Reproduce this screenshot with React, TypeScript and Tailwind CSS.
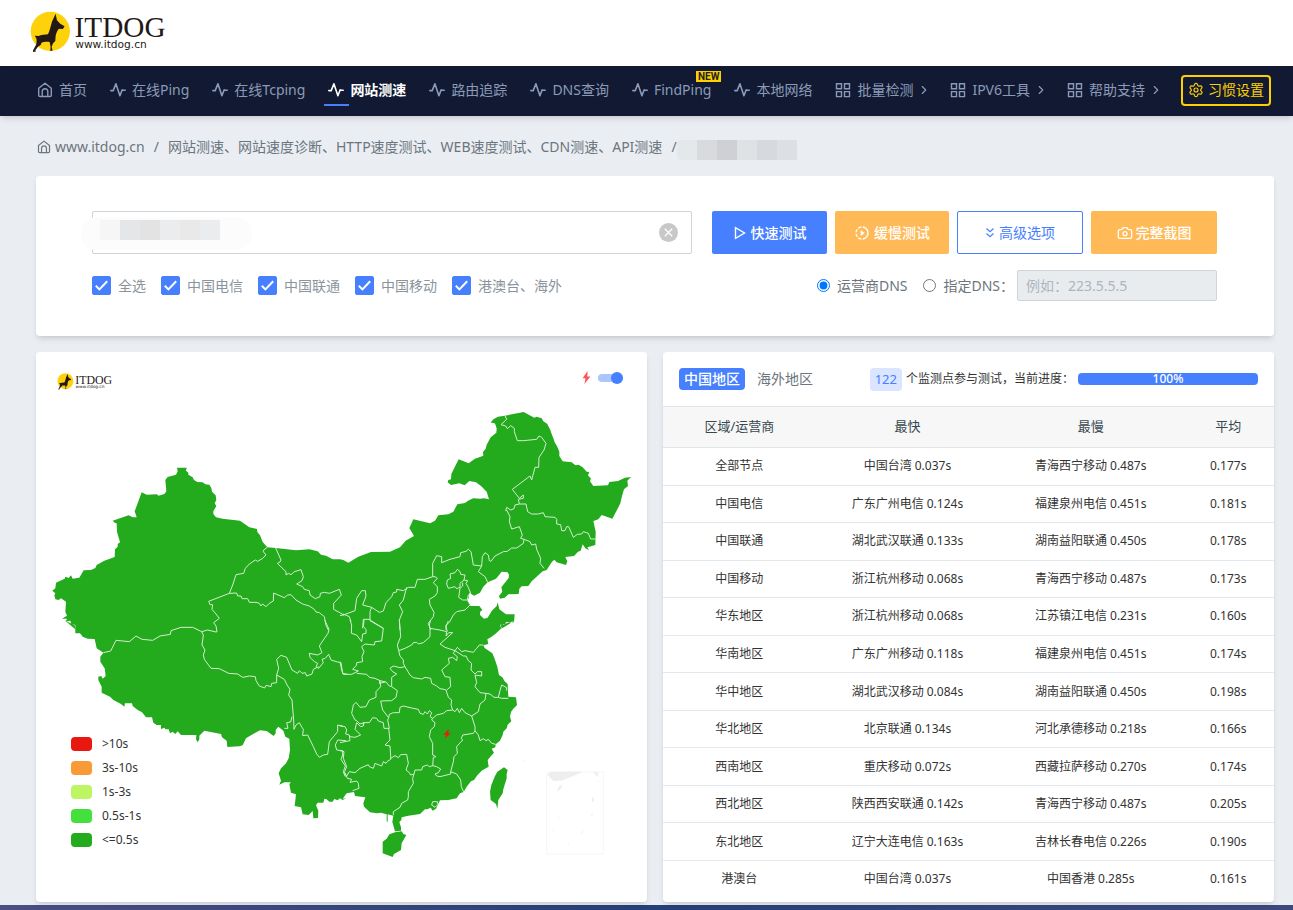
// src/App.tsx
import React, { useState } from 'react';
import { MdOutlineSlowMotionVideo } from 'react-icons/md';
import { Camera, ChevronRight, ChevronsDown, Settings } from 'lucide-react';

type IconName = 'home' | 'pulse' | 'grid';

const navItems: { label: string; icon: IconName; active?: boolean; isNew?: boolean; more?: boolean }[] = [
  { label: '首页', icon: 'home' },
  { label: '在线Ping', icon: 'pulse' },
  { label: '在线Tcping', icon: 'pulse' },
  { label: '网站测速', icon: 'pulse', active: true },
  { label: '路由追踪', icon: 'pulse' },
  { label: 'DNS查询', icon: 'pulse' },
  { label: 'FindPing', icon: 'pulse', isNew: true },
  { label: '本地网络', icon: 'pulse' },
  { label: '批量检测', icon: 'grid', more: true },
  { label: 'IPV6工具', icon: 'grid', more: true },
  { label: '帮助支持', icon: 'grid', more: true },
];

const lines = ['全选', '中国电信', '中国联通', '中国移动', '港澳台、海外'];

const rows = [
  ['全部节点', '中国台湾 0.037s', '青海西宁移动 0.487s', '0.177s'],
  ['中国电信', '广东广州电信 0.124s', '福建泉州电信 0.451s', '0.181s'],
  ['中国联通', '湖北武汉联通 0.133s', '湖南益阳联通 0.450s', '0.178s'],
  ['中国移动', '浙江杭州移动 0.068s', '青海西宁移动 0.487s', '0.173s'],
  ['华东地区', '浙江杭州移动 0.068s', '江苏镇江电信 0.231s', '0.160s'],
  ['华南地区', '广东广州移动 0.118s', '福建泉州电信 0.451s', '0.174s'],
  ['华中地区', '湖北武汉移动 0.084s', '湖南益阳联通 0.450s', '0.198s'],
  ['华北地区', '北京联通 0.134s', '河北承德移动 0.218s', '0.166s'],
  ['西南地区', '重庆移动 0.072s', '西藏拉萨移动 0.270s', '0.174s'],
  ['西北地区', '陕西西安联通 0.142s', '青海西宁移动 0.487s', '0.205s'],
  ['东北地区', '辽宁大连电信 0.163s', '吉林长春电信 0.226s', '0.190s'],
  ['港澳台', '中国台湾 0.037s', '中国香港 0.285s', '0.161s'],
];

const legend = [
  { label: '>10s', color: 'bg-[#e81710]' },
  { label: '3s-10s', color: 'bg-[#f89a35]' },
  { label: '1s-3s', color: 'bg-[#bef663]' },
  { label: '0.5s-1s', color: 'bg-[#44e03e]' },
  { label: '<=0.5s', color: 'bg-[#24aa1d]' },
];

// The map is drawn in four quarters: [dx, dy] is where each quarter starts.
const NW = [0, 0];
const NE = [912, 0];
const SW = [0, 810];
const SE = [912, 810];

const outline: { at: number[]; pts: string }[] = [
  {
    at: NW,
    pts: '420,374 425,364 423,353 452,353 450,362 457,368 457,374 470,382 474,390 484,396 500,397 508,403 520,404 526,414 528,425 539,436 541,450 536,460 541,468 532,484 532,492 540,502 560,506 612,512 640,532 663,537 664,546 672,556 680,576 694,592 719,594 780,601 820,598 845,604 855,614 870,617 890,628',
  },
  {
    at: NE,
    pts: '0,628 10,630 25,638 55,620 93,606 150,605 180,592 197,572 222,558 208,534 220,508 270,520 285,512 295,496 325,493 340,485 352,463 375,459 384,452 400,445 420,446 432,445 447,448 440,425 424,409 408,397 388,393 374,406 358,400 333,405 323,397 325,390 333,388 334,372 356,328 386,340 405,326 430,317 429,306 437,296 440,284 452,262 469,248 470,236 467,225 463,219 452,218 460,208 474,200 495,197 551,186 583,203 590,200 605,205 610,214 622,222 631,240 635,252 640,265 644,277 652,290 658,305 658,318 668,334 695,337 706,346 716,344 728,352 740,365 748,366 744,376 753,386 750,394 760,408 804,406 808,396 834,393 855,383 873,381 862,392 864,408 852,418 846,438 841,460 834,474 817,506 785,495 775,508 760,513 767,545 766,585 748,590 742,592 747,601 736,595 728,583 722,602 714,605 702,618 676,621 682,634 678,645 650,637 643,629 636,635 620,660 608,664 575,694 565,708 545,709 538,716 536,732 505,733 494,743 480,746 477,738 487,725 484,712 506,684 507,674 503,667 485,665 468,686 443,697 430,710 420,728 402,737 388,728 386,745 382,752 392,768 418,768 427,780 420,786 420,795 432,806 443,803 455,783 470,768 473,757 478,778 498,793 524,793 522,817 510,818 500,815 492,824 480,824 484,836',
  },
  {
    at: SE,
    pts: '522,3 500,10 482,16 485,24 470,38 455,50 442,58 445,72 430,76 434,84 457,100 463,114 472,140 477,165 487,172 494,184 503,192 505,230 528,232 531,255 520,266 513,276 510,290 514,304 503,314 500,325 490,335 488,345 480,362 467,373 466,382 455,386 462,398 453,408 443,420 446,440 435,446 425,452 412,466 402,480 393,484 380,500 371,516 360,520 350,535 325,540 300,541 288,566 278,572 272,563 262,568 255,568 240,582 205,587 185,592 184,600 178,606 183,622 183,632 165,634 157,606 160,587 143,583 143,606 140,604 140,583 122,578 112,580 90,577 72,560 70,550 76,532 45,528 42,516 20,520 8,536',
  },
  {
    at: SW,
    pts: '930,535 920,540 912,535 905,541 895,537 890,545 880,545 872,538 865,536 862,548 845,548 840,556 847,572 846,594 832,595 830,573 818,585 800,583 795,562 776,558 780,523 765,518 760,492 765,487 745,487 730,494 735,482 728,460 735,445 750,430 758,415 762,390 760,356 748,350 742,332 727,320 719,330 719,340 713,348 692,333 672,331 650,343 630,355 620,376 610,379 574,381 572,362 558,352 555,342 505,332 490,347 490,358 485,367 480,358 481,345 435,345 425,334 418,342 410,335 402,340 398,328 388,328 386,323 375,327 375,315 362,315 352,308 348,292 330,292 318,277 305,270 290,258 288,250 267,250 265,260 255,252 232,240 222,230 197,218 197,200 187,180 187,170 196,168 200,176 209,168 206,145 193,125 193,110 202,98 182,85 176,57 155,56 140,50 132,40 118,40 118,15 100,8 85,0',
  },
  {
    at: NW,
    pts: '118,838 116,825 105,820 103,812 90,814 93,806 78,806 93,797 88,786 90,755 75,745 68,750 58,748 55,735 58,730 49,722 58,715 60,698 86,686 88,680 98,684 105,676 110,686 130,683 143,661 165,660 178,654 182,645 205,632 236,621 237,598 245,590 245,582 252,577 243,545 242,520 236,518 230,512 278,496 290,502 302,502 296,484 317,427 332,434 362,433 368,437 385,432 391,424 388,390 395,381',
  },
];

const outlinePoints = outline
  .flatMap(({ at, pts }) => pts.split(' ').map((p) => p.split(',').map(Number)).map(([x, y]) => `${x + at[0]},${y + at[1]}`))
  .join(' ');

const borders: { at: number[]; paths: string[] }[] = [
  {
    at: NW,
    paths: [
      '694,592 683,600 682,605 690,615 680,625 665,634 658,630 640,642 628,655 623,670 600,674 590,705 580,730 518,754 522,764 530,764 528,778 540,792 550,805 533,818 540,828 543,845 540,846 515,840 497,845 470,832 435,832 405,842 403,853 372,858 350,871 318,868 300,858 280,875 240,871 224,903 202,908',
      '719,594 735,630 732,636 724,640 750,665 750,675 757,670 765,674 775,665 795,659 802,680 798,692 782,702 800,710 805,718 820,722 822,735 838,746 852,740 853,730 865,727 880,730 910,718 916,735 893,760 893,778 915,790 925,797',
      '580,730 602,729 605,738 615,738 618,746 635,746 640,757 660,757 670,760 675,768 680,762 690,770 700,760 712,753 713,729 745,743 755,735 765,734 780,750 800,762 820,768 835,778 840,786 850,788 865,800 870,826 877,840',
    ],
  },
  {
    at: SW,
    paths: [
      '866,0 879,28 876,40 862,60 850,78 858,98 845,105 820,100 822,112 835,125 845,130 840,140 848,145 862,128 858,118 868,115 878,103 885,120 905,126 915,128 920,160 935,163',
      '848,140 832,148 828,162 812,168 808,158 798,160 790,152 785,160 768,150 752,112 735,106 722,118 728,145 722,165 722,188 707,190 705,200 690,196 686,204 670,198 660,182 658,170 640,168 620,172 605,162 578,160 550,146 525,145 505,118 502,105 507,90 498,75 502,45 497,35',
      '722,165 745,178 753,195 762,208 758,225 768,240 773,300 774,328',
      '768,290 764,306 752,308 756,325 745,325',
      '774,328 780,315 790,308 798,322 802,328 800,347 815,345 832,380 842,402 850,412 862,405 875,403 880,365 905,335 905,315 920,318',
      '930,362 905,360 898,375 902,390 920,392 920,405 915,418 928,438 922,455 928,470',
    ],
  },
  {
    at: SE,
    paths: [
      '0,318 15,320 20,330 17,342 28,345 30,362 0,368',
      '30,350 45,352 62,345 45,328 50,308 62,320 70,318 72,308 60,312 50,302 45,300 35,280 40,255 48,247 60,262 78,260 88,240 108,232 108,215 122,200 120,182 138,186 148,198 155,200 172,212 168,232 155,242 122,243 128,270 146,293',
      '146,293 143,300 148,325 132,325 130,308 115,303 110,295 98,293 88,308 70,308 70,318',
      '146,325 150,360 135,375 150,378 152,410 152,418 142,424 138,430 130,425 125,438 105,430 100,445 88,440 85,434 60,445 45,458 28,455 20,468 12,460 20,440 10,415 12,395 0,392',
      '15,458 22,475 35,478 30,487 50,483 55,490 57,505 38,512',
      '152,415 165,407 175,413 182,404 200,403 205,430 198,450 208,458 212,465 222,462 225,450 245,450 248,440 262,435 268,440 278,437',
      '222,462 218,475 220,490 205,515 205,530 203,540 185,550 180,562 160,575 160,585',
      '278,437 280,412 288,410 278,405 278,370 268,350 272,330 283,320 285,308 275,300 278,295',
      '146,293 148,283 160,278 178,278 180,262 190,258 215,264 235,268 240,280 250,283 255,275 262,282 268,272 275,278 270,290 278,295 290,285 310,280 320,272 338,270 333,255 335,240 325,232 318,210',
      '195,140 210,165 220,173 245,177 255,172 272,175 275,190 290,198 300,206 312,208 318,210',
      '176,92 180,108 190,120 190,130 195,140 180,143 160,138 150,145 158,155 170,162 155,172 155,198',
      '178,0 182,50 172,75 176,92 195,85 215,75 220,68 230,67 235,72 250,68 270,50 270,25 268,15 272,0',
      '270,25 300,30 320,35 318,48 326,38 338,38 300,72 315,82 345,92',
      '325,3 318,20 322,35',
      '345,92 340,100 352,110 350,122 338,112 325,115 328,130 305,150 315,170 330,172 332,200 320,210',
      '345,92 352,82 365,95 375,92 390,95 400,97 410,85 418,75 430,75',
      '345,92 370,108 378,108 385,122 395,130 393,150 405,162 412,155 425,155 425,168 405,165 410,188 405,200 420,218 438,220 435,240 420,252 415,275 395,288 405,320 405,332',
      '338,270 345,275 352,265 358,278 365,265 375,278 395,288',
      '438,220 450,222 462,232 475,232 480,212 485,195 500,203 500,212',
      '475,232 485,235 505,235',
      '405,332 400,340 368,345 364,355 368,360 350,380 352,400 342,410 340,425 332,455',
      '405,332 415,345 420,362 430,356 438,362 445,358 455,370 467,373',
      '278,437 290,440 302,447 295,458 285,462 290,468 300,470 332,462 332,455 350,462 362,480 364,500 371,516',
      '275,555 278,545 292,545 294,553 285,562 275,555',
      '0,125 5,150 10,163 35,163 55,153 38,148 50,135 50,128 68,125 66,110 72,95 65,80 75,72 103,75 105,65 125,63 130,25 90,0',
      '50,160 80,163 88,172 105,175 120,182 118,190 135,186',
      '30,0 35,15 34,40 50,45 65,65 68,42 78,40 78,28 70,20 72,0',
    ],
  },
  {
    at: NE,
    paths: [
      '0,797 15,793 45,782 50,745 65,722 76,722 78,738 68,765 95,772 118,787 130,783 138,758 155,740 160,728 170,726 170,718 190,722 205,712 225,712 232,688 255,688 278,680 278,640 290,617 305,620 305,638 330,628 360,620 362,608 378,604 385,598 393,605 400,645 425,648 415,665 435,680 443,697',
      '200,712 190,750 178,765 188,785 178,810 180,840',
      '10,792 28,800 33,815',
      '95,772 90,785 90,812 130,835',
      '90,808 70,808 68,835',
      '425,648 427,620 435,608 445,615 448,632 453,634 465,618 490,605 502,604 515,594 530,594 550,580 552,568 570,575 575,585 587,582 590,598 602,625 600,640 612,655',
      '278,680 285,680 292,685 280,698 292,710 292,728 285,738 268,748 270,765 282,787 280,800 265,820 272,840',
      '318,840 318,825 328,817 340,795 350,785 375,780 390,765',
      '320,702 322,690 332,685 330,672 345,668 352,658 360,665 362,673 375,675 372,690 360,700 360,712 350,716 345,710 325,715 320,702',
      '372,690 383,692 378,700 385,712 392,730 385,735 382,750 368,750 356,742 360,715 368,708 368,698',
      '552,568 542,565 547,555 538,530 515,537 508,515 510,500 500,480 497,482 500,472 512,480 522,476 525,465 538,462',
      '495,197 500,208 483,224 497,228 502,236 512,227 523,235 523,245 532,272 550,272 590,268 597,258 605,262 618,280 612,300 597,322 596,352 585,352 575,390 570,378 517,418 538,445 550,435 550,445 535,448 538,462 558,462 563,485 575,492 595,492 610,488 615,500 645,502 650,508 650,522 662,524 665,542 675,542 680,530 686,530 700,562 712,553 725,552 730,545 745,550 752,567 767,567',
    ],
  },
];

const NavIcon: React.FC<{ name: IconName; className?: string }> = ({ name, className = 'size-4' }) => (
  <svg
    viewBox="0 0 16 16"
    className={`${className} shrink-0`}
    fill="none"
    stroke="currentColor"
    strokeWidth="1.4"
    strokeLinejoin="round"
    strokeLinecap="round"
    aria-hidden="true"
  >
    {name === 'home' && <path d="M1.7 6.3 8 1.3l6.3 5v6.9a1.3 1.3 0 0 1-1.3 1.3H3a1.3 1.3 0 0 1-1.3-1.3ZM5.2 14.2V9.6a2.8 2.8 0 0 1 5.6 0v4.6" />}
    {name === 'pulse' && <path d="M.8 8.6h2.4L5.9 1.8l4 12 2.3-6 .6.5h2.4" strokeWidth="1.6" />}
    {name === 'grid' && <path d="M1.5 1.7h5v5h-5zM9.5 1.7h5v5h-5zM1.5 9.6h5v5h-5zM9.5 9.6h5v5h-5z" strokeLinejoin="miter" />}
  </svg>
);

const Logo: React.FC<{ className: string }> = ({ className }) => (
  <svg viewBox="12 14 427 126" className={className} role="img" aria-label="ITDOG">
    <circle cx="73" cy="75" r="59" fill="#fdd20a" />
    <path
      fill="#231815"
      d="M89 22 93 42 103 52 116 60 111 68 99 67C93 74 90 82 89 90L88 104 82 110 79 116 77 122 80 133 73 134 74 122 71 107C62 106 52 107 47 109L44 116 36 121 28 132 30 136 21 137 21 133 31 114 32 103 31 96 26 88 38 89 46 86 66 84C71 74 74 60 78 46Z"
    />
    <text x="146" y="92" fontSize="88" fill="#231815" className="font-['Liberation_Serif',serif]">ITDOG</text>
    <text x="148" y="126" fontSize="32" fill="#231815" className="font-['DejaVu_Sans',sans-serif]">www.itdog.cn</text>
  </svg>
);

const Header: React.FC = () => (
  <header>
    <div className="flex h-[66px] items-center bg-white pb-0.5 pl-[30px]">
      <a href="#"><Logo className="h-[42px] w-[142px]" /></a>
    </div>
    <nav className="flex h-[50px] items-center justify-between bg-[#111a32] pr-[22px] pb-0.5 pl-[37px] text-[#8c9ab8] shadow-md">
      <ul className="flex items-center gap-[23px]">
        {navItems.map((item) => (
          <li key={item.label} className="relative">
            <a
              href="#"
              className={`flex items-center gap-1.5 whitespace-nowrap ${item.active ? 'font-semibold text-white' : ''}`}
            >
              <NavIcon name={item.icon} />
              {item.label}
              {item.more && <ChevronRight className="-mr-1 -ml-0.5 size-3.5" aria-hidden="true" />}
            </a>
            {item.active && <span className="absolute top-6 -left-1 h-0.5 w-[25px] bg-[#4680ff]" />}
            {item.isNew && (
              <span className="absolute -top-[9px] -right-2.5 bg-[#ffcf00] px-0.5 font-['Roboto',sans-serif] text-[10px] leading-[11px] font-bold text-[#222]">
                NEW
              </span>
            )}
          </li>
        ))}
      </ul>
      <button className="flex h-[31px] items-center gap-1 rounded border-2 border-[#ffcf00] px-[5px] whitespace-nowrap text-[#ffcf00]">
        <Settings className="size-4" strokeWidth={1.8} aria-hidden="true" />
        习惯设置
      </button>
    </nav>
  </header>
);

const Breadcrumb: React.FC = () => (
  <div className="flex h-[60px] items-center pt-0.5 pl-px text-[#6c757d]">
    <NavIcon name="home" className="size-3.5" />
    <a href="#" className="pl-1">www.itdog.cn</a>
    <span className="px-[9px]">/</span>
    <span>网站测速、网站速度诊断、HTTP速度测试、WEB速度测试、CDN测速、API测速</span>
    <span className="pl-[9px]">/</span>
    <span className="mt-1.5 flex h-5">
      <i className="w-5 rounded-l bg-[#e5e8eb]" />
      <i className="w-5 bg-[#d8dadd]" />
      <i className="w-5 bg-[#cfd0d5]" />
      <i className="w-5 bg-[#dfe2e5]" />
      <i className="w-5 bg-[#d6d9dd]" />
      <i className="w-5 bg-[#dcdfe3]" />
    </span>
  </div>
);

const SearchCard: React.FC = () => {
  const [url, setUrl] = useState('');
  const [checked, setChecked] = useState<string[]>(lines);

  const toggle = (name: string) =>
    setChecked(checked.includes(name) ? checked.filter((c) => c !== name) : [...checked, name]);

  return (
    <section className="flex flex-col gap-4 rounded bg-white py-[35px] pr-[57px] pl-14 shadow-md">
      <div className="flex gap-5">
        <div className="relative flex-1">
          <input
            aria-label="网址"
            value={url}
            onChange={(e) => setUrl(e.target.value)}
            className="h-[43px] w-full rounded-xs border border-[#ced4da] px-3 outline-none"
          />
          <span className="pointer-events-none absolute top-1.5 -left-[11px] flex h-[33px] w-[171px] rounded-2xl bg-[#fcfcfc] py-[3px] pl-[19px]">
            <i className="h-5 w-5 bg-[#f6f6f6]" />
            <i className="h-5 w-5 bg-[#e5e6e8]" />
            <i className="h-5 w-5 bg-[#e3e3e4]" />
            <i className="h-5 w-5 bg-[#ebecee]" />
            <i className="h-5 w-5 bg-[#e9e9e9]" />
            <i className="h-5 w-5 bg-[#ebecee]" />
          </span>
          <button aria-label="清空" onClick={() => setUrl('')} className="absolute top-3 right-3.5">
            <svg viewBox="0 0 19 19" className="size-[19px]">
              <circle cx="9.5" cy="9.5" r="9.5" fill="#c8c8c8" />
              <path d="m5.8 5.8 7.4 7.4m0-7.4-7.4 7.4" stroke="#fff" strokeWidth="1.3" />
            </svg>
          </button>
        </div>
        <div className="flex gap-2 text-white">
          <button className="flex h-[43px] w-[115px] items-center justify-center gap-1 rounded-xs bg-[#4680ff] font-medium">
            <svg viewBox="0 0 14 14" className="size-3.5" fill="none" stroke="currentColor" strokeWidth="1.4">
              <path d="M2.5 1.7v10.6L11.5 7Z" />
            </svg>
            快速测试
          </button>
          <button className="flex h-[43px] w-[114px] items-center justify-center gap-1 rounded-xs bg-[#ffba57] font-medium">
            <MdOutlineSlowMotionVideo className="size-4" />
            缓慢测试
          </button>
          <button className="flex h-[43px] w-[126px] items-center justify-center gap-1 rounded-xs border border-[#4680ff] bg-white text-[#4680ff]">
            <svg viewBox="0 0 10 12" className="h-3 w-2.5" fill="none" stroke="currentColor" strokeWidth="1.2">
              <path d="m1.5 1.5 3.5 3.2 3.5-3.2M1.5 6.5 5 9.7l3.5-3.2" />
            </svg>
            高级选项
          </button>
          <button className="flex h-[43px] w-[126px] items-center justify-center gap-[3px] rounded-xs bg-[#ffba57] font-medium">
            <Camera className="size-4" />
            完整截图
          </button>
        </div>
      </div>

      <div className="flex h-[31px] items-center justify-between">
        <div className="flex items-center gap-[15px] text-[#8b949c]">
          {lines.map((name) => (
            <label key={name} className="flex items-center gap-[7px]">
              <span className="relative flex">
                <input
                  type="checkbox"
                  checked={checked.includes(name)}
                  onChange={() => toggle(name)}
                  className="peer size-[19px] appearance-none rounded-xs border border-[#adb5bd] checked:border-[#4680ff] checked:bg-[#4680ff]"
                />
                <svg
                  viewBox="0 0 19 19"
                  className="pointer-events-none absolute inset-0 hidden size-[19px] peer-checked:block"
                  fill="none"
                  stroke="#fff"
                  strokeWidth="2"
                >
                  <path d="m3.8 9.8 3.6 3.6 7.8-8.2" />
                </svg>
              </span>
              {name}
            </label>
          ))}
        </div>
        <div className="flex items-center text-[#6c757d]">
          <label className="flex items-center gap-[7px]">
            <input type="radio" name="dns" defaultChecked className="size-[13px]" />
            运营商DNS
          </label>
          <label className="mr-[3px] ml-4 flex items-center gap-[7px]">
            <input type="radio" name="dns" className="size-[13px]" />
            指定DNS：
          </label>
          <input
            aria-label="指定DNS"
            disabled
            placeholder="例如：223.5.5.5"
            className="h-[31px] w-[200px] rounded-xs border border-[#ced4da] bg-[#e9ecef] px-2 placeholder:text-[#adb5bd]"
          />
        </div>
      </div>
    </section>
  );
};

const MapCard: React.FC = () => (
  <section className="relative rounded bg-white shadow-md">
    <svg viewBox="0 6 1833 1650" className="w-full" role="img" aria-label="中国地图">
      <g fill="#24aa1d">
        <polygon points={outlinePoints} />
        <g transform="translate(912 810)">
          <polygon points="165,637 185,634 190,642 199,645 185,670 183,690 162,702 158,711 150,708 128,700 128,665 140,656 148,643" />
          <polygon points="480,450 492,442 503,450 500,462 500,475 490,508 488,520 475,540 472,567 468,552 452,540 450,515 454,495 465,468 472,455" />
        </g>
      </g>
      {borders.map(({ at, paths }, i) => (
        <g
          key={i}
          transform={`translate(${at[0]} ${at[1]})`}
          fill="none"
          stroke="#d3eed1"
          strokeWidth="3"
          strokeLinejoin="round"
        >
          {paths.map((p) => <polyline key={p} points={p} />)}
        </g>
      ))}
      {/* 南海诸岛 */}
      <g transform="translate(912 810)" fill="#eee">
        <path d="M620 456H790V702H620Z" fill="none" stroke="#f5f5f5" strokeWidth="3" />
        <path d="M622 464 632 455H730L665 482 640 483ZM760 457H775L772 471ZM650 512 658 498 668 495 660 510ZM756 533H761V545H756ZM751 590 758 577V584ZM722 641 732 627 727 640ZM652 597 662 583 656 595ZM777 487 782 477 780 486ZM683 673 690 671 685 675ZM637 627H640V637ZM551 421H555V424H551Z" />
      </g>
      <path d="M1236 1140 1223 1154H1232L1228 1165 1243 1150H1234L1239 1141Z" fill="#f01a0a" stroke="#f01a0a" />
    </svg>

    <Logo className="absolute top-[21px] left-[21px] h-[17px] w-[58px]" />

    <label className="absolute top-[19px] right-6 flex items-center gap-[7px]">
      <svg viewBox="0 0 9 13" className="h-[13px] w-[9px]" fill="#ff5252" aria-hidden="true">
        <path d="M5.6 0 .6 7.2h2.9L2.4 13l6-7.6H5.3Z" />
      </svg>
      <input type="checkbox" defaultChecked aria-label="闪电标记" className="peer sr-only" />
      <span className="flex h-2 w-[25px] items-center justify-end rounded-full bg-[#abc5ff]">
        <span className="size-3 rounded-full bg-[#4680ff]" />
      </span>
    </label>

    <ul className="absolute bottom-[50px] left-[35px] text-xs leading-6 text-[#333]">
      {legend.map(({ label, color }) => (
        <li key={label} className="flex items-center gap-2.5">
          <span className={`h-3.5 w-[21px] rounded ${color}`} />
          {label}
        </li>
      ))}
    </ul>
  </section>
);

const ResultCard: React.FC = () => (
  <section className="rounded bg-white pb-[5px] shadow-md">
    <div className="flex h-[54px] items-center justify-between px-4">
      <div className="flex items-center gap-2">
        <button className="h-[22px] rounded bg-[#4680ff] px-[5px] leading-[22px] font-medium text-white">中国地区</button>
        <button className="px-1 text-[#6c757d]">海外地区</button>
      </div>
      <div className="flex items-center text-xs text-[#333]">
        <span className="h-[23px] rounded bg-[#dae5ff] px-[5px] text-[13px] leading-[23px] text-[#4680ff]">122</span>
        <span className="pl-1 whitespace-nowrap">个监测点参与测试，当前进度：</span>
        <div
          role="progressbar"
          aria-valuenow={100}
          aria-label="进度"
          className="ml-1 h-3 w-[180px] rounded bg-[#4680ff] text-center leading-3 font-medium text-white"
        >
          100%
        </div>
      </div>
    </div>
    <table className="h-[491px] w-full table-fixed text-center text-xs text-[#333]">
      <thead className="bg-[#f7f7f7] text-[13px] text-[#37474f]">
        <tr className="h-[41px] border-y border-[#e2e5e8]">
          <th className="w-1/4 font-normal">区域/运营商</th>
          <th className="w-[30%] font-normal">最快</th>
          <th className="w-[30%] font-normal">最慢</th>
          <th className="w-[15%] font-normal">平均</th>
        </tr>
      </thead>
      <tbody>
        {rows.map((row) => (
          <tr key={row[0]} className="border-b border-[#e2e8ee] last:border-b-0">
            {row.map((cell, i) => <td key={i}>{cell}</td>)}
          </tr>
        ))}
      </tbody>
    </table>
  </section>
);

const App: React.FC = () => (
  <div className="min-h-screen bg-[#eaeef3] font-['Noto_Sans','Noto_Sans_CJK_SC',sans-serif] text-sm leading-5">
    <Header />
    <main className="pr-[19px] pb-[3px] pl-9">
      <Breadcrumb />
      <SearchCard />
      <div className="mt-4 grid grid-cols-2 gap-4">
        <MapCard />
        <ResultCard />
      </div>
    </main>
    <footer className="h-[5px] bg-linear-to-r from-[#4a4f85] via-[#26407c] to-[#3c4a80]" />
  </div>
);

export default App;
